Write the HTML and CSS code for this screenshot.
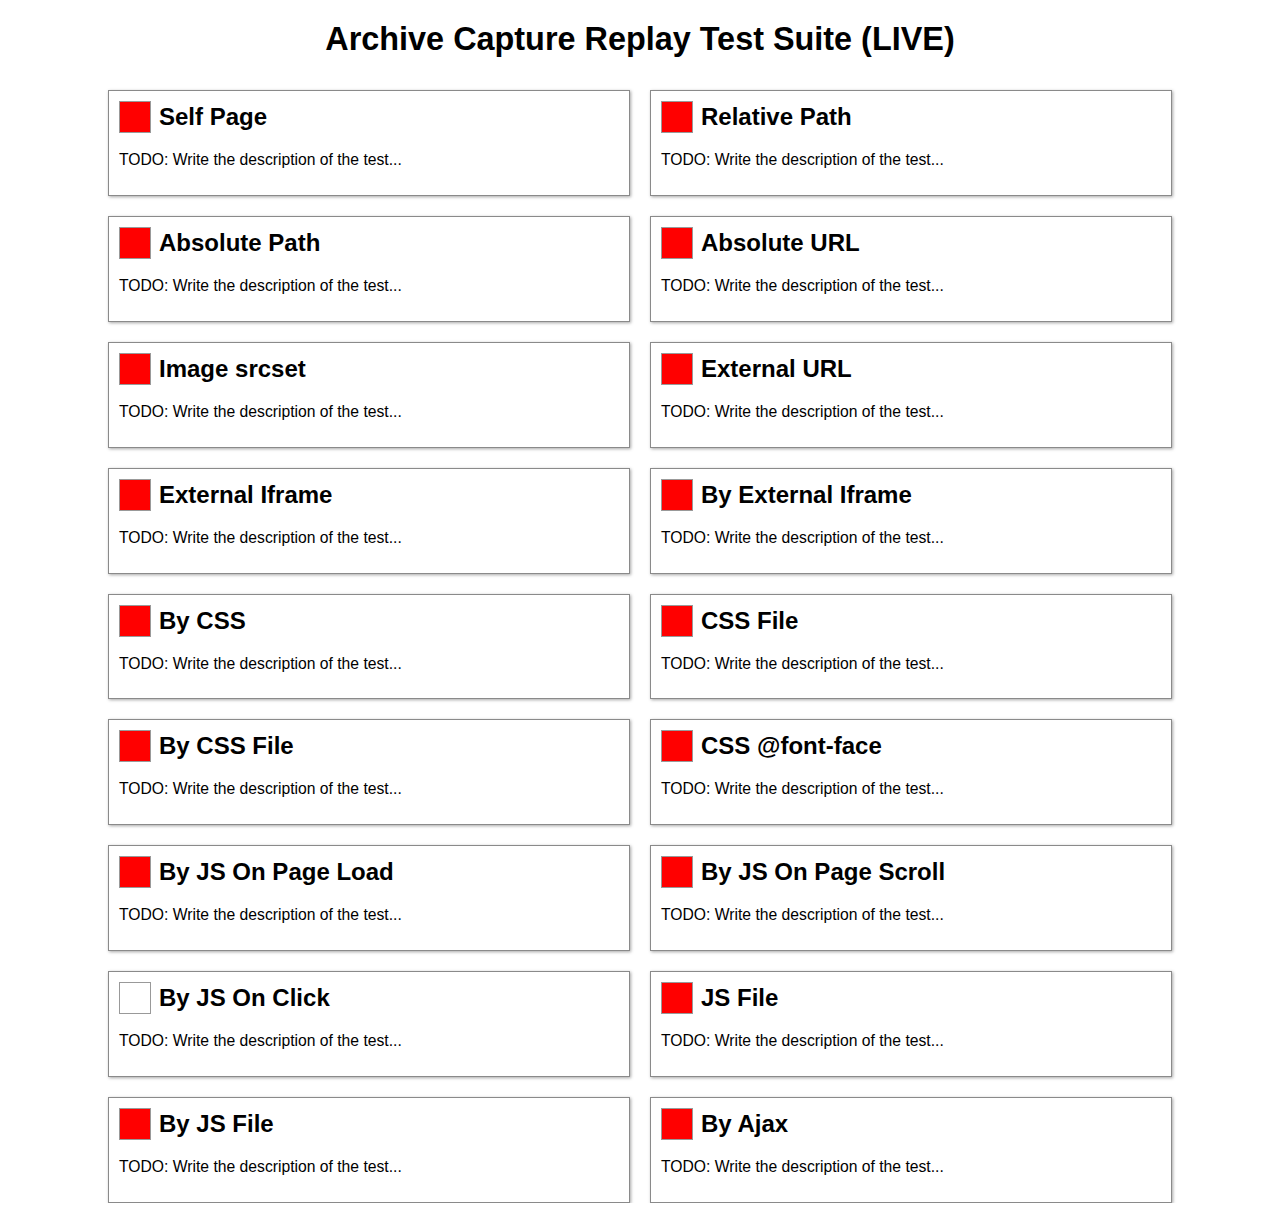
FILE: index.html
```html
<!DOCTYPE html>
<html>
<head>
<meta charset="utf-8">
<title>Archive Capture Replay Test Suite (LIVE)</title>
<link rel="stylesheet" href="styles.css">
</head>
<body>
<h1 class="title">Archive Capture Replay Test Suite (LIVE)</h1>
<div class="grid">
  <div class="card"><div class="head"><span class="box red"></span><h2>Self Page</h2></div><p>TODO: Write the description of the test...</p></div>
  <div class="card"><div class="head"><span class="box red"></span><h2>Relative Path</h2></div><p>TODO: Write the description of the test...</p></div>
  <div class="card"><div class="head"><span class="box red"></span><h2>Absolute Path</h2></div><p>TODO: Write the description of the test...</p></div>
  <div class="card"><div class="head"><span class="box red"></span><h2>Absolute URL</h2></div><p>TODO: Write the description of the test...</p></div>
  <div class="card"><div class="head"><span class="box red"></span><h2>Image srcset</h2></div><p>TODO: Write the description of the test...</p></div>
  <div class="card"><div class="head"><span class="box red"></span><h2>External URL</h2></div><p>TODO: Write the description of the test...</p></div>
  <div class="card"><div class="head"><span class="box red"></span><h2>External Iframe</h2></div><p>TODO: Write the description of the test...</p></div>
  <div class="card"><div class="head"><span class="box red"></span><h2>By External Iframe</h2></div><p>TODO: Write the description of the test...</p></div>
  <div class="card"><div class="head"><span class="box red"></span><h2>By CSS</h2></div><p>TODO: Write the description of the test...</p></div>
  <div class="card"><div class="head"><span class="box red"></span><h2>CSS File</h2></div><p>TODO: Write the description of the test...</p></div>
  <div class="card"><div class="head"><span class="box red"></span><h2>By CSS File</h2></div><p>TODO: Write the description of the test...</p></div>
  <div class="card"><div class="head"><span class="box red"></span><h2>CSS @font-face</h2></div><p>TODO: Write the description of the test...</p></div>
  <div class="card"><div class="head"><span class="box red"></span><h2>By JS On Page Load</h2></div><p>TODO: Write the description of the test...</p></div>
  <div class="card"><div class="head"><span class="box red"></span><h2>By JS On Page Scroll</h2></div><p>TODO: Write the description of the test...</p></div>
  <div class="card"><div class="head"><span class="box"></span><h2>By JS On Click</h2></div><p>TODO: Write the description of the test...</p></div>
  <div class="card"><div class="head"><span class="box red"></span><h2>JS File</h2></div><p>TODO: Write the description of the test...</p></div>
  <div class="card"><div class="head"><span class="box red"></span><h2>By JS File</h2></div><p>TODO: Write the description of the test...</p></div>
  <div class="card"><div class="head"><span class="box red"></span><h2>By Ajax</h2></div><p>TODO: Write the description of the test...</p></div>
</div>
</body>
</html>
```
FILE: styles.css
```css
html, body {
  margin: 0;
  padding: 0;
  background: #fff;
  color: #000;
  font-family: "Liberation Sans", Arial, sans-serif;
}
.title {
  margin: 21px 0 0;
  font-size: 32.4px;
  line-height: 37px;
  font-weight: bold;
  text-align: center;
}
.grid {
  width: 1064px;
  margin: 32px auto 0;
  display: grid;
  grid-template-columns: 1fr 1fr;
  gap: 20px;
}
.card {
  box-sizing: border-box;
  height: 105.875px;
  border: 1px solid #8a8a8a;
  box-shadow: 1px 1px 3px rgba(0, 0, 0, 0.35);
  padding: 10px;
}
.head {
  display: flex;
  align-items: center;
  gap: 8px;
  height: 32px;
}
.box {
  box-sizing: border-box;
  width: 32px;
  height: 32px;
  border: 1px solid #999;
  background: #fff;
  flex: none;
}
.box.red {
  background: #f00;
}
.head h2 {
  margin: 0;
  font-size: 24px;
  line-height: 28px;
  font-weight: bold;
}
.card p {
  margin: 18px 0 0;
  font-size: 15.7px;
  line-height: 18px;
}
```
